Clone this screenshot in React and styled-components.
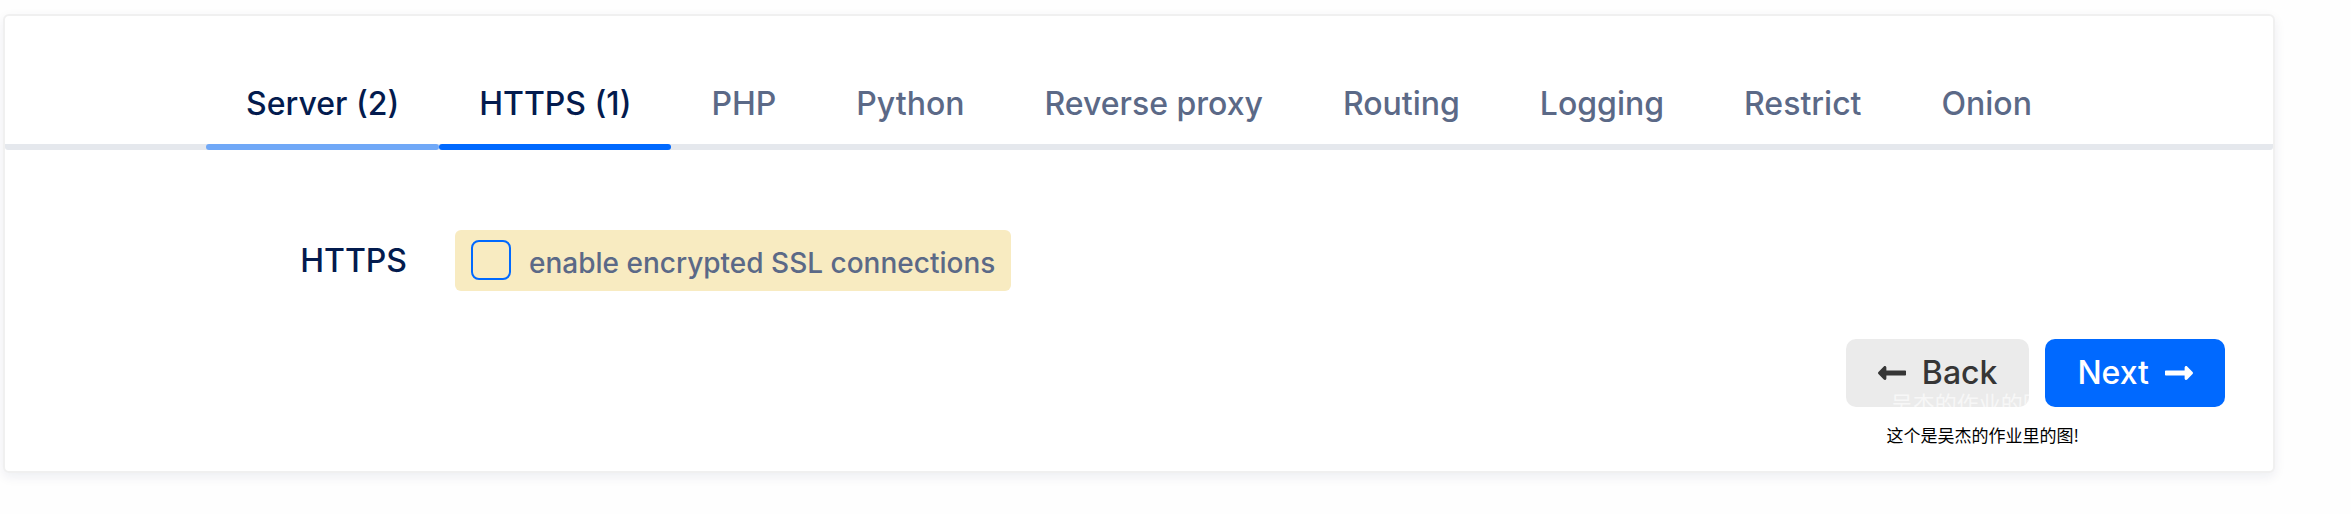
import React, { useState } from 'react';
import styled, { createGlobalStyle } from 'styled-components';
import { FaLongArrowAltLeft, FaLongArrowAltRight } from 'react-icons/fa';

const GlobalStyle = createGlobalStyle`
  *, *::before, *::after { box-sizing: border-box; }
  body {
    margin: 0;
    background: #fefefe;
    color: #031b4e;
    font-family: Inter, "Liberation Sans", "Noto Sans CJK SC", sans-serif;
    font-size: 32px;
    font-weight: 500;
    line-height: 48px;
  }
`;

const Page = styled.main`
  padding: 14px 76px 40px 3px;
`;

const Card = styled.section`
  background: #fff;
  border: 2px solid #f0f0f0;
  border-radius: 6px;
  box-shadow: 0 4px 12px rgba(3, 27, 78, 0.07);
`;

const TabList = styled.nav`
  display: flex;
  justify-content: center;
  padding-top: 56px;
  background: linear-gradient(#e5e8ed, #e5e8ed) bottom / 100% 6px no-repeat;
  border-radius: 3px;
`;

const lineColors = { done: '#70a8f7', active: '#0069ff', idle: 'transparent' };

const Tab = styled.a`
  position: relative;
  padding: 8px 40px 22px;
  white-space: nowrap;
  text-decoration: none;
  color: ${({ $state }) => ($state === 'idle' ? '#5b6987' : '#031b4e')};

  &::after {
    content: '';
    position: absolute;
    inset: auto 0 0;
    height: 6px;
    border-radius: 3px;
    background: ${({ $state }) => lineColors[$state]};
  }
`;

const Form = styled.form`
  padding: 80px 48px 64px;
`;

const Field = styled.div`
  display: grid;
  grid-template-columns: 1fr 5fr;
  column-gap: 48px;
  align-items: center;
`;

const FieldLabel = styled.span`
  text-align: right;
`;

const Option = styled.label`
  display: flex;
  align-items: flex-start;
  justify-self: start;
  gap: 18px;
  padding: 10px 16px 11px;
  border-radius: 6px;
  background: #f8ebc1;
  color: #5b6987;
  font-size: 28px;
  line-height: 40px;
  white-space: nowrap;
`;

const OptionText = styled.span`
  height: 40px;
  padding-top: 3px;
`;

const Checkbox = styled.input`
  appearance: none;
  flex: none;
  width: 40px;
  height: 40px;
  margin: 0;
  border: 2px solid #0069ff;
  border-radius: 8px;

  &:checked {
    background: #0069ff;
  }
`;

const Actions = styled.div`
  position: relative;
  display: flex;
  justify-content: flex-end;
  gap: 16px;
  padding-top: 48px;
`;

const Button = styled.button`
  position: relative;
  display: flex;
  align-items: center;
  gap: 16px;
  height: 68px;
  padding: 0 32px;
  overflow: hidden;
  border: 0;
  border-radius: 10px;
  background: ${({ $primary }) => ($primary ? '#0069ff' : '#ebebeb')};
  color: ${({ $primary }) => ($primary ? '#fff' : '#363636')};
  font: inherit;
  white-space: nowrap;

  svg {
    width: 28px;
    height: 32px;
  }
`;

const Watermark = styled.span`
  position: absolute;
  top: 47px;
  left: 45px;
  color: #f7f7f7;
  font-family: "Noto Sans CJK SC", sans-serif;
  font-size: 22px;
  font-weight: 400;
  line-height: 32px;
`;

const Note = styled.span`
  position: absolute;
  top: 100%;
  right: 146px;
  padding-top: 16px;
  color: #000;
  font-family: "Noto Sans CJK SC", sans-serif;
  font-size: 17px;
  font-weight: 400;
  line-height: 24px;
  white-space: nowrap;
`;

const tabs = [
  ['Server (2)', 'done'],
  ['HTTPS (1)', 'active'],
  ['PHP', 'idle'],
  ['Python', 'idle'],
  ['Reverse proxy', 'idle'],
  ['Routing', 'idle'],
  ['Logging', 'idle'],
  ['Restrict', 'idle'],
  ['Onion', 'idle'],
];

export default function App() {
  const [enabled, setEnabled] = useState(false);

  return (
    <Page>
      <GlobalStyle />
      <Card>
        <TabList>
          {tabs.map(([label, state]) => (
            <Tab key={label} href="#" $state={state}>{label}</Tab>
          ))}
        </TabList>
        <Form>
          <Field>
            <FieldLabel>HTTPS</FieldLabel>
            <Option htmlFor="https">
              <Checkbox
                id="https"
                type="checkbox"
                checked={enabled}
                onChange={(event) => setEnabled(event.target.checked)}
              />
              <OptionText>enable encrypted SSL connections</OptionText>
            </Option>
          </Field>
          <Actions>
            <Button type="button">
              <FaLongArrowAltLeft />
              Back
              <Watermark>吴杰的作业的图</Watermark>
            </Button>
            <Button type="button" $primary>
              Next
              <FaLongArrowAltRight />
            </Button>
            <Note>这个是吴杰的作业里的图!</Note>
          </Actions>
        </Form>
      </Card>
    </Page>
  );
}
